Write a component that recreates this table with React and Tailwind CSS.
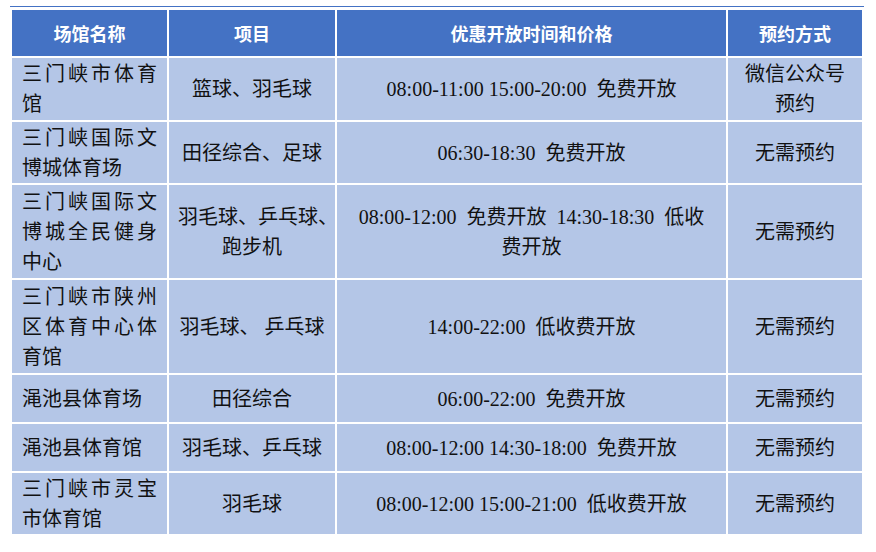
import React from "react";

const F = { fontFamily: '"Liberation Serif", "Noto Sans CJK SC", sans-serif' };

const rows = [
  { h: "h-[62px]", name: [["三门峡市体育", true], ["馆", false]], item: ["篮球、羽毛球"], time: ["08:00-11:00 15:00-20:00  免费开放"], way: ["微信公众号", "预约"] },
  { h: "h-[61px]", name: [["三门峡国际文", true], ["博城体育场", false]], item: ["田径综合、足球"], time: ["06:30-18:30  免费开放"], way: ["无需预约"] },
  { h: "h-[93px]", name: [["三门峡国际文", true], ["博城全民健身", true], ["中心", false]], item: [<>羽毛球、乒乓球<span className="inline-block w-[8px]">、</span></>, "跑步机"], time: ["08:00-12:00  免费开放  14:30-18:30  低收", "费开放"], way: ["无需预约"] },
  { h: "h-[93px]", name: [["三门峡市陕州", true], ["区体育中心体", true], ["育馆", false]], item: ["羽毛球、 乒乓球"], time: ["14:00-22:00  低收费开放"], way: ["无需预约"] },
  { h: "h-[47px]", name: [["渑池县体育场", false]], item: ["田径综合"], time: ["06:00-22:00  免费开放"], way: ["无需预约"] },
  { h: "h-[47px]", name: [["渑池县体育馆", false]], item: ["羽毛球、乒乓球"], time: ["08:00-12:00 14:30-18:00  免费开放"], way: ["无需预约"] },
  { h: "h-[61px]", name: [["三门峡市灵宝", true], ["市体育馆", false]], item: ["羽毛球"], time: ["08:00-12:00 15:00-21:00  低收费开放"], way: ["无需预约"] },
];

function Lines({ lines }) {
  return (
    <div className="flex flex-col items-center">
      {lines.map((l, i) => (
        <div key={i} className="whitespace-pre leading-[30px]">{l}</div>
      ))}
    </div>
  );
}

export default function App() {
  return (
    <div className="w-[876px] h-[552px] bg-white" style={F}>
      <div className="pt-[6px] pl-[10px]">
        <div className="w-[854px] h-px bg-[#4472c4]" />
      </div>
      <div className="pt-[3px] pl-[12px]">
        <div className="grid grid-cols-[155px_166px_389px_134px] gap-[2px] text-[20px] text-[#111]">
          {["场馆名称", "项目", "优惠开放时间和价格", "预约方式"].map((t) => (
            <div key={t} className="h-[46px] bg-[#4472c4] flex items-center justify-center text-white font-bold text-[18px]" style={{ fontFamily: '"Noto Sans CJK SC", sans-serif' }}>
              {t}
            </div>
          ))}
          {rows.map((r, i) => (
            <React.Fragment key={i}>
              <div className={`${r.h} bg-[#b4c6e7] flex flex-col justify-center px-[10px]`}>
                {r.name.map(([t, j], k) => (
                  <div key={k} className={`leading-[30px] whitespace-nowrap ${j ? "text-justify [text-align-last:justify]" : "text-left"}`}>{t}</div>
                ))}
              </div>
              <div className={`${r.h} bg-[#b4c6e7] flex items-center justify-center`}>
                <Lines lines={r.item} />
              </div>
              <div className={`${r.h} bg-[#b4c6e7] flex items-center justify-center`}>
                <Lines lines={r.time} />
              </div>
              <div className={`${r.h} bg-[#b4c6e7] flex items-center justify-center`}>
                <Lines lines={r.way} />
              </div>
            </React.Fragment>
          ))}
        </div>
      </div>
    </div>
  );
}
